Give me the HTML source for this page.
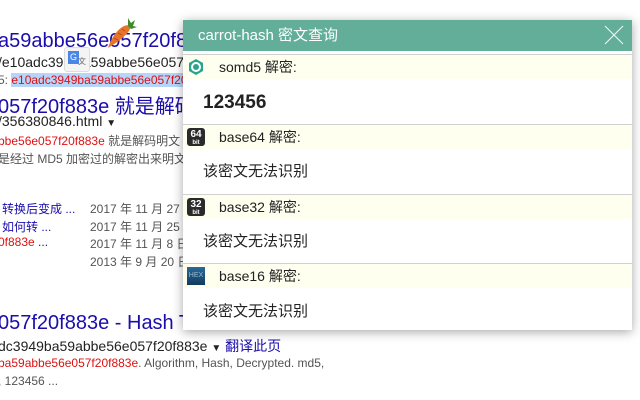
<!DOCTYPE html>
<html><head><meta charset="utf-8"><style>
body{margin:0;width:640px;height:400px;overflow:hidden;background:#fff;font-family:"Liberation Sans","Noto Sans CJK SC",sans-serif;position:relative}
.a{position:absolute;white-space:nowrap}
.t{color:#1a0dab;font-size:20px}
.g{color:#006621;font-size:14px}
.s{color:#545454;font-size:12px}
.r{color:#dd1111}
#pop{position:absolute;left:183px;top:20px;width:449px;height:310px;background:#fff;box-shadow:0 2px 10px rgba(0,0,0,.35)}
.hd{height:31px;background:#62ae98;color:#fff;font-size:15px;line-height:31px;padding-left:15px}
.row{position:absolute;left:0;width:449px;height:24px;background:#fffff0;border-top:1px solid #d0d0d0;font-size:14px;line-height:24px;color:#222}
.row>span{position:absolute;left:36px}
.res{position:absolute;left:20px;font-size:15px;color:#222}
.ic{position:absolute;left:4px;top:3px;width:18px;height:18px;border-radius:3px}
.bd{background:#2a2a2a;color:#fff;text-align:center;font-weight:bold}
.bd b{display:block;font-size:10px;line-height:11px;margin-top:1px}
.bd i{display:block;font-style:normal;font-size:6px;line-height:6px}
</style></head><body>
<div class="a t" style="left:-2px;top:30px">a59abbe56e057f20f883</div>
<div class="a g" style="left:-2px;top:54px;color:#222">/e10adc39&nbsp;&nbsp;&nbsp;&nbsp;&nbsp;a59abbe56e057</div>
<div class="a s" style="left:-2px;top:73px">5: <span class="r" style="background:#b5d5fb">e10adc3949ba59abbe56e057f20f</span></div>
<div class="a" style="left:64px;top:47px;width:24px;height:23px;background:#f4f4f4;border:1px solid #ddd;border-radius:3px"><div style="position:absolute;left:3px;top:3px;width:11px;height:13px;background:#4a86e8;color:#fff;font-size:9px;text-align:center;line-height:13px">G</div><div style="position:absolute;left:13px;top:8px;font-size:8px;color:#666">文</div></div>
<svg class="a" style="left:100px;top:14px" width="38" height="38" viewBox="0 0 38 38"><path d="M30 12 C24 8 12 20 8 34 C18 28 32 18 30 12Z" fill="#e8742a"/><path d="M14 24 l4 2 M18 19 l4 2 M22 15 l3 2" stroke="#b8501a" stroke-width="1"/><path d="M28 12 l0-8 l3 5 l4-3 l-2 6 l4 1 l-6 2z" fill="#3f8a2a"/></svg>
<div class="a t" style="left:-2px;top:90px">057f20f883e 就是解码明</div>
<div class="a g" style="left:-2px;top:113px;color:#222">/356380846.html <span style="font-size:10px">▼</span></div>
<div class="a s" style="left:-2px;top:132px"><span class="r">bbe56e057f20f883e</span> 就是解码明文</div>
<div class="a s" style="left:-2px;top:150px">是经过 MD5 加密过的解密出来明文</div>
<div class="a s" style="left:2px;top:200px;color:#1a0dab">转换后变成 ...</div>
<div class="a s" style="left:2px;top:218px;color:#1a0dab">如何转 ...</div>
<div class="a s" style="left:-2px;top:235px;color:#1a0dab"><span class="r">0f883e</span> ...</div>
<div class="a s" style="left:90px;top:200px">2017 年 11 月 27</div>
<div class="a s" style="left:90px;top:218px">2017 年 11 月 25</div>
<div class="a s" style="left:90px;top:235px">2017 年 11 月 8 日</div>
<div class="a s" style="left:90px;top:253px">2013 年 9 月 20 日</div>
<div class="a t" style="left:-2px;top:312px">057f20f883e - Hash Toolkit</div>
<div class="a g" style="left:-2px;top:336px;color:#222">dc3949ba59abbe56e057f20f883e <span style="font-size:10px">▼</span> <span style="color:#1a0dab">翻译此页</span></div>
<div class="a s" style="left:-2px;top:356px"><span class="r">ba59abbe56e057f20f883e</span>. Algorithm, Hash, Decrypted. md5,</div>
<div class="a s" style="left:-2px;top:374px">, 123456 ...</div>
<div id="pop">
<div class="hd">carrot-hash 密文查询</div>
<svg style="position:absolute;right:8px;top:5px" width="20" height="20"><path d="M1 1L19 19M19 1L1 19" stroke="#e8f5f0" stroke-width="1.2"/></svg>
<div class="row" style="top:34px"><svg class="ic" viewBox="0 0 18 18"><path d="M9 1L16 5V13L9 17L2 13V5Z" fill="#2aa58c"/><circle cx="9" cy="9" r="4" fill="none" stroke="#fff" stroke-width="2"/></svg><span>somd5 解密:</span></div>
<div class="res" style="top:72px;font-size:19px;font-weight:bold">123456</div>
<div class="row" style="top:104px"><div class="ic bd"><b>64</b><i>bit</i></div><span>base64 解密:</span></div>
<div class="res" style="top:140px">该密文无法识别</div>
<div class="row" style="top:174px"><div class="ic bd"><b>32</b><i>bit</i></div><span>base32 解密:</span></div>
<div class="res" style="top:210px">该密文无法识别</div>
<div class="row" style="top:243px"><div class="ic" style="background:linear-gradient(#2b6a9a,#123a5e);border-radius:0;color:#9bc;font-size:7px;line-height:18px;text-align:center">HEX</div><span>base16 解密:</span></div>
<div class="res" style="top:280px">该密文无法识别</div>
</div>
</body></html>
